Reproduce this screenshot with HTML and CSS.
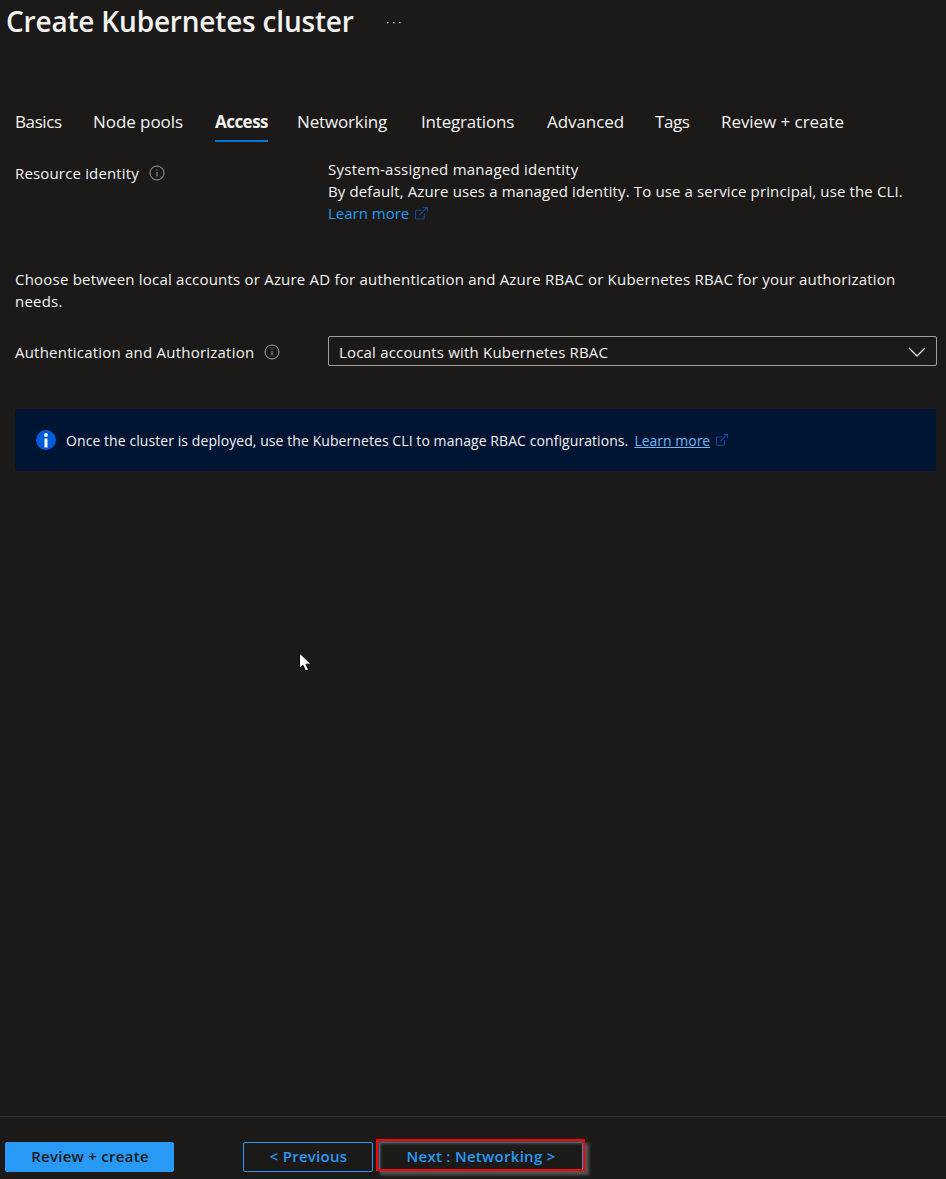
FILE: index.html
```html
<!DOCTYPE html>
<html lang="en">
<head>
<meta charset="utf-8">
<title>Create Kubernetes cluster</title>
<link rel="stylesheet" href="styles.css">
</head>
<body>
<div class="page">
  <header class="header">
    <h1 class="title">Create Kubernetes cluster</h1>
    <svg class="more" width="14" height="3" viewBox="0 0 14 3"><path d="M0 1h1.500v1.300H0zM6 1h1.500v1.300H6zM12 1h1.500v1.300H12z" fill="#d0d0cf"/></svg>
  </header>
  <nav class="tabs">
    <a class="tab tab-basics">Basics</a>
    <a class="tab">Node pools</a>
    <a class="tab active">Access</a>
    <a class="tab tab-networking">Networking</a>
    <a class="tab tab-integrations">Integrations</a>
    <a class="tab">Advanced</a>
    <a class="tab tab-tags">Tags</a>
    <a class="tab">Review + create</a>
  </nav>
  <main class="main">
    <section class="row identity">
      <div class="label label-identity">Resource identity
        <svg class="info" width="16" height="16" viewBox="0 0 16 16"><circle cx="8" cy="8" r="7" fill="none" stroke="#a09f9e"/><path d="M7.500 4.500h1v1h-1zM7.500 7h1v4.500h-1z" fill="#a09f9e"/></svg>
      </div>
      <div class="value">
        <div class="identity-name">System-assigned managed identity</div>
        <div class="identity-help">By default, Azure uses a managed identity. To use a service principal, use the CLI.</div>
        <a class="link">Learn more<svg class="external" width="13" height="13" viewBox="0 0 14 14" fill="none" stroke="#0d4ba6" stroke-width="1.100"><path d="M7 3.500H1.500a1 1 0 0 0-1 1V12a1 1 0 0 0 1 1H9a1 1 0 0 0 1-1V7M5 8.500L13 .5M9 .5h4.500V5"/></svg></a>
      </div>
    </section>
    <p class="description">Choose between local accounts or Azure AD for authentication and Azure RBAC or Kubernetes RBAC for your authorization<br>needs.</p>
    <section class="row auth">
      <div class="label">Authentication and Authorization
        <svg class="info" width="16" height="16" viewBox="0 0 16 16"><circle cx="8" cy="8" r="7" fill="none" stroke="#a09f9e"/><path d="M7.500 4.500h1v1h-1zM7.500 7h1v4.500h-1z" fill="#a09f9e"/></svg>
      </div>
      <div class="select">Local accounts with Kubernetes RBAC
        <svg class="chevron" width="18" height="10" viewBox="0 0 18 10" fill="none" stroke="#e0dfde" stroke-width="1.300"><path d="M1 1l8 8 8-8"/></svg>
      </div>
    </section>
    <section class="notice">
      <svg class="notice-icon" width="20" height="20" viewBox="0 0 20 20"><circle cx="10" cy="10" r="10" fill="#015cda"/><circle cx="10" cy="5" r="1.900" fill="#fff"/><path d="M8.500 8.500h3v9h-3z" fill="#fff"/></svg>
      <span class="notice-text">Once the cluster is deployed, use the Kubernetes CLI to manage RBAC configurations.</span>
      <a class="notice-link">Learn more</a>
      <svg class="notice-external" width="12" height="12" viewBox="0 0 14 14" fill="none" stroke="#0d4ba6" stroke-width="1.200"><path d="M7 3.500H1.500a1 1 0 0 0-1 1V12a1 1 0 0 0 1 1H9a1 1 0 0 0 1-1V7M5 8.500L13 .5M9 .5h4.500V5"/></svg>
    </section>
  </main>
  <footer class="footer">
    <button class="btn primary">Review + create</button>
    <button class="btn previous">&lt; Previous</button>
    <button class="btn next">Next : Networking &gt;</button>
  </footer>
  <div class="highlight"></div>
  <svg class="cursor" width="13" height="20" viewBox="0 0 13 20"><path d="M.5 1v15.500l3.500-3.300 2.500 5.800 3-1.300-2.500-5.500h5z" fill="#fff" stroke="#0a0a18"/></svg>
</div>
</body>
</html>
```

FILE: styles.css
```css
* { box-sizing: border-box; }
body { margin: 0; background: #1b1a19; color: #f3f2f1; font-family: "Open Sans", "Noto Sans", sans-serif; font-size: 15px; line-height: 22px; }
.page { width: 946px; height: 1179px; display: flex; flex-direction: column; position: relative; overflow: hidden; white-space: nowrap; }
.header { display: flex; height: 104px; padding-left: 6px; }
.title { margin: 1px 0 0; width: 381px; font-size: 28px; line-height: 40px; font-weight: 600; letter-spacing: -0.19px; }
.more { margin-top: 21px; }
.tabs { display: grid; grid-template-columns: 78px 122px 82px 124px 126px 108px 66px auto; justify-content: start; padding-left: 15px; height: 38px; font-size: 17px; line-height: 36px; }
.tab { justify-self: start; height: 38px; letter-spacing: -0.06px; }
.tab-basics { letter-spacing: -0.4px; }
.tab-networking { letter-spacing: -0.15px; }
.tab-integrations { letter-spacing: -0.2px; }
.tab-tags { letter-spacing: -0.4px; }
.active { font-weight: 700; letter-spacing: -0.53px; border-bottom: 2px solid #0078d4; }
.main { flex: 1; padding: 0 9px 0 15px; }
.row { display: grid; grid-template-columns: 313px 1fr; }
.identity { padding-top: 16px; }
.label { display: flex; align-items: center; height: 30px; gap: 10px; letter-spacing: 0.22px; }
.label-identity { letter-spacing: 0.16px; }
.auth .label { height: 31px; padding-top: 1px; }
.identity-name { letter-spacing: 0.25px; }
.identity-help { letter-spacing: 0.13px; }
.link { color: #2899f5; display: flex; align-items: center; gap: 6px; }
.description { margin: 44px 0 24px; letter-spacing: 0.21px; }
.select { height: 30px; border: 1px solid #a09f9e; border-radius: 2px; display: flex; align-items: center; justify-content: space-between; padding: 2px 10px 0; letter-spacing: 0.18px; }
.notice { margin: 42px 1px 0 0; height: 62px; background: #001433; border-radius: 2px; display: flex; align-items: center; padding-left: 21px; font-size: 14px; }
.notice-icon { margin-right: 10px; }
.notice-text { padding-top: 2px; letter-spacing: 0.075px; }
.notice-link { color: #6cb8f6; margin-left: 6px; padding-top: 2px; text-decoration: underline; }
.notice-external { margin-left: 6px; }
.footer { height: 63px; border-top: 1px solid #323130; display: flex; padding: 25px 0 0 5px; }
.btn { height: 30px; border: 1px solid #2899f5; border-radius: 2px; background: none; color: #2899f5; font: 600 15px/26px "Open Sans", sans-serif; letter-spacing: 0.28px; padding: 0 0 2px 1px; }
.primary { width: 169px; background: #2899f5; color: #1b1a19; }
.previous { width: 130px; margin-left: 69px; }
.next { width: 204px; margin-left: 6px; padding-right: 1px; }
/* Callout frame over the Next button */
.highlight { position: absolute; left: 376px; top: 1139px; width: 209px; height: 32px; border: 2px solid #f00; box-shadow: 4px 4px 3px #555, inset 3px 3px 3px rgba(85, 85, 85, 0.8); }
.cursor { position: absolute; left: 299px; top: 652px; }
```
